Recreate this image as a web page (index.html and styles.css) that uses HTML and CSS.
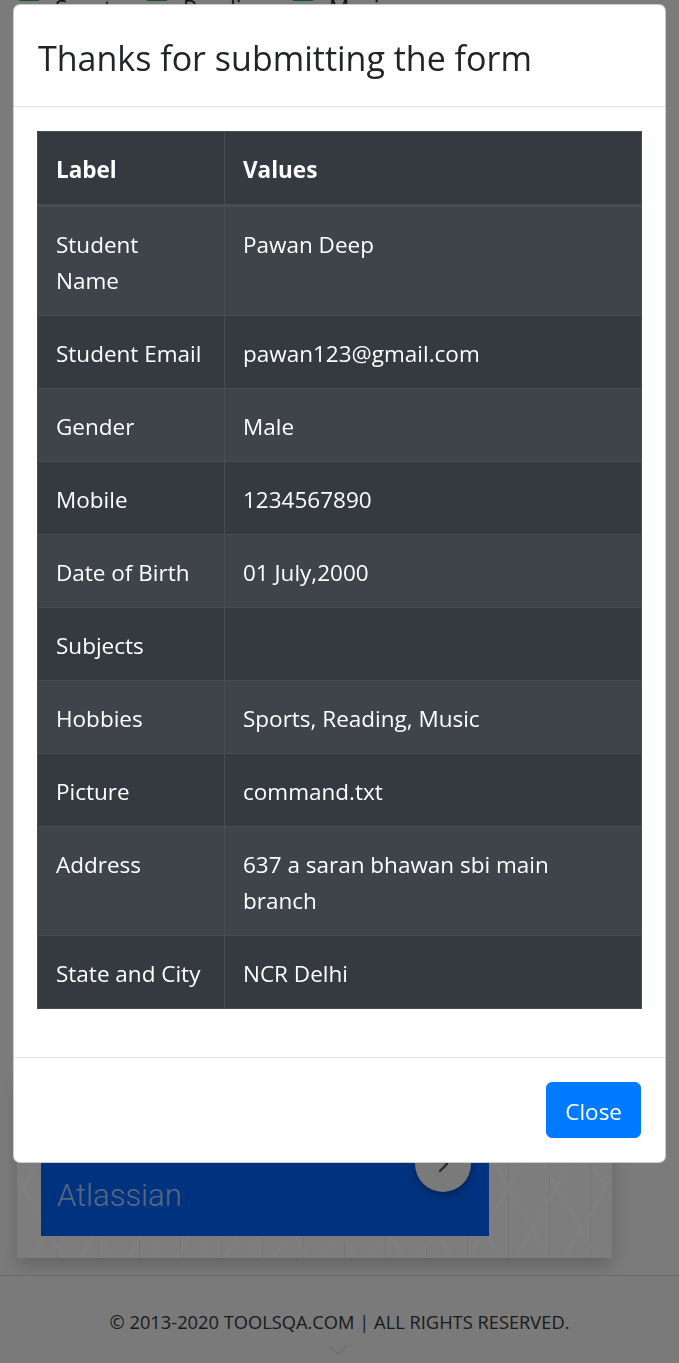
FILE: index.html
```html
<!DOCTYPE html>
<html lang="en">
<head>
<meta charset="utf-8">
<title>Practice Form</title>
<link rel="stylesheet" href="styles.css">
</head>
<body>
<div class="page">
  <div class="strip">
    <div class="checks">
      <div class="chk"><span class="box"></span><span class="chk-label">Sports</span></div>
      <div class="chk"><span class="box"></span><span class="chk-label">Reading</span></div>
      <div class="chk"><span class="box"></span><span class="chk-label">Music</span></div>
    </div>
  </div>
  <div class="spacer"></div>
  <div class="card">
    <div class="promo">
      <span class="promo-title">Atlassian</span>
      <span class="promo-btn">
        <svg width="24" height="24" viewBox="0 0 24 24"><path d="M9 5l7 7-7 7" fill="none" stroke="#555" stroke-width="2.4" stroke-linecap="round" stroke-linejoin="round"/></svg>
      </span>
    </div>
  </div>
  <footer class="footer">
    <span class="footer-text">© 2013-2020 TOOLSQA.COM | ALL RIGHTS RESERVED.</span>
    <svg class="footer-arrow" width="22" height="12" viewBox="0 0 22 12"><path d="M2 2l9 8 9-8" fill="none" stroke="#dcdcdc" stroke-width="1.6"/></svg>
  </footer>
</div>

<div class="backdrop"></div>

<div class="modal">
  <div class="modal-header">
    <div class="modal-title">Thanks for submitting the form</div>
  </div>
  <div class="modal-body">
    <table class="table">
      <colgroup><col class="col-label"><col></colgroup>
      <thead>
        <tr><th>Label</th><th>Values</th></tr>
      </thead>
      <tbody>
        <tr><td>Student Name</td><td>Pawan Deep</td></tr>
        <tr><td>Student Email</td><td>pawan123@gmail.com</td></tr>
        <tr><td>Gender</td><td>Male</td></tr>
        <tr><td>Mobile</td><td>1234567890</td></tr>
        <tr><td>Date of Birth</td><td>01 July,2000</td></tr>
        <tr><td>Subjects</td><td></td></tr>
        <tr><td>Hobbies</td><td>Sports, Reading, Music</td></tr>
        <tr><td>Picture</td><td>command.txt</td></tr>
        <tr><td>Address</td><td>637 a saran bhawan sbi main branch</td></tr>
        <tr><td>State and City</td><td>NCR Delhi</td></tr>
      </tbody>
    </table>
  </div>
  <div class="modal-footer">
    <button class="btn-close" type="button">Close</button>
  </div>
</div>
</body>
</html>
```

FILE: styles.css
```css
* { box-sizing: border-box; }

html, body {
  margin: 0;
  padding: 0;
}

body {
  font-family: "Open Sans", "Noto Sans", sans-serif;
  font-size: 22.5px;
  line-height: 36px;
  color: #212529;
  background: #f6f6f6;
  overflow: hidden;
}

.page {
  height: 1363px;
  display: flex;
  flex-direction: column;
  overflow: hidden;
}

/* top strip with peeking checkboxes */
.strip {
  height: 4px;
  overflow: hidden;
  flex: none;
}

.checks {
  display: flex;
  margin-top: -23px;
  padding-left: 17px;
}

.chk {
  display: flex;
  align-items: flex-start;
  gap: 14px;
}

.chk:nth-child(1) { width: 128px; }
.chk:nth-child(2) { width: 146px; }

.box {
  width: 24px;
  height: 24px;
  background: #28a745;
  border-radius: 4px;
  flex: none;
}

.chk-label {
  color: #212529;
  line-height: 36px;
  margin-top: 13px;
}

.spacer { flex: 1; }

/* advertisement card */
.card {
  margin: 0 67px 17px 17px;
  padding: 0 123px 22px 24px;
  background-color: #fbfbfb;
  background-image:
    repeating-linear-gradient(60deg, transparent 0 40px, rgba(255,255,255,0.9) 40px 42px),
    repeating-linear-gradient(-60deg, transparent 0 40px, rgba(255,255,255,0.9) 40px 42px),
    repeating-linear-gradient(90deg, transparent 0 40px, rgba(230,230,230,0.8) 40px 41px);
  box-shadow: 0 8px 16px rgba(0,0,0,0.18);
  flex: none;
}

.promo {
  height: 160px;
  background: #0066ff;
  display: flex;
  align-items: flex-end;
  justify-content: space-between;
  padding: 0 18px 20px 16px;
}

.promo-title {
  font-family: Roboto, sans-serif;
  font-weight: 300;
  font-size: 31px;
  line-height: 40px;
  color: rgba(255,255,255,0.7);
}

.promo-btn {
  width: 56px;
  height: 56px;
  border-radius: 50%;
  background: #f4f4f4;
  display: flex;
  align-items: center;
  justify-content: center;
  margin-bottom: 24px;
  box-shadow: 0 4px 8px rgba(0,0,0,0.3);
}

/* footer */
.footer {
  flex: none;
  height: 88px;
  border-top: 1px solid #d0d0d0;
  background: #f4f4f4;
  display: flex;
  flex-direction: column;
  align-items: center;
  padding-top: 32px;
}

.footer-text {
  font-size: 18.3px;
  line-height: 27px;
  color: #363636;
}

.footer-arrow {
  margin-top: 9px;
  margin-left: -4px;
}

/* modal overlay */
.backdrop {
  position: fixed;
  inset: 0;
  background: rgba(0,0,0,0.5);
}

.modal {
  position: fixed;
  top: 4px;
  left: 13px;
  width: 653px;
  background: #fff;
  border: 1px solid rgba(0,0,0,0.2);
  border-radius: 7px;
  overflow: hidden;
}

.modal-header {
  padding: 26px 24px 21px;
  border-bottom: 1px solid #dee2e6;
}

.modal-title {
  font-size: 34px;
  line-height: 54px;
  font-weight: 400;
  color: #212529;
}

.modal-body {
  padding: 24px 23px;
}

.table {
  width: 100%;
  margin-bottom: 24px;
  border-collapse: collapse;
  table-layout: fixed;
  background: #343a40;
  color: #fff;
  border: 1px solid #454d55;
}

.col-label { width: 187px; }

.table th,
.table td {
  padding: 20px 18px 16px;
  line-height: 36px;
  vertical-align: top;
  text-align: left;
  border: 1px solid #454d55;
}

.table th {
  font-weight: 700;
  border-bottom: 3px solid #454d55;
}

.table tbody tr:nth-child(odd) {
  background: #3e444a;
}

.modal-footer {
  border-top: 1px solid #dee2e6;
  padding: 18px;
  display: flex;
  justify-content: flex-end;
}

.btn-close {
  margin: 6px;
  font-family: inherit;
  font-size: 22.5px;
  line-height: 36px;
  padding: 11px 18px 7px;
  color: #fff;
  background: #007bff;
  border: 1px solid #007bff;
  border-radius: 6px;
}
```
